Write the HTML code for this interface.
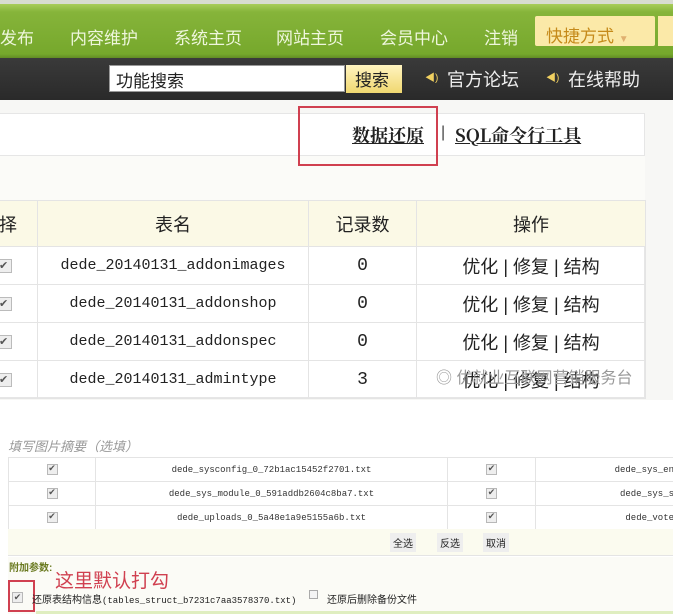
<!DOCTYPE html>
<html><head><meta charset="utf-8"><style>
*{margin:0;padding:0;box-sizing:border-box}
body{width:673px;height:614px;overflow:hidden;background:#fff;font-family:"Liberation Sans","Noto Sans CJK SC",sans-serif;position:relative}
.abs{position:absolute}
.nav{left:0;top:0;width:673px;height:58px;background:linear-gradient(#a8cc5a 0,#86b43a 8px,#76a82c 50px,#4d6e1c 58px);border-top:4px solid #d8dcd0}
.nav span{position:absolute;top:20px;color:#eef6dc;font-size:17px}
.bar2{left:0;top:58px;width:673px;height:42px;background:linear-gradient(#3a3a3a,#2a2a2a)}
.mono{font-family:"Liberation Mono","Noto Sans CJK SC",monospace}
.cb{display:inline-block;width:11px;height:11px;border:1px solid #b8b8b8;background:#eee;font-size:9px;line-height:9px;text-align:center;color:#555;vertical-align:middle}
.cbl{display:inline-block;width:13px;height:14px;border:1px solid #bbb;border-left:none;background:#eee;font-size:11px;line-height:12px;color:#555;vertical-align:middle}
td{border:1px solid #e4e4e4;text-align:center}
</style></head><body>
<div class="abs nav">
<span style="left:0">发布</span>
<span style="left:70px">内容维护</span>
<span style="left:174px">系统主页</span>
<span style="left:276px">网站主页</span>
<span style="left:380px">会员中心</span>
<span style="left:484px">注销</span>
<div class="abs" style="left:535px;top:12px;width:120px;height:30px;background:#fbe9a8;border-radius:2px"></div>
<span style="left:546px;top:18px;color:#c58a1a">快捷方式 <small style="color:#e0b070;font-size:10px">▼</small></span>
<div class="abs" style="left:658px;top:12px;width:15px;height:30px;background:#fbe9a8"></div>
</div>
<div class="abs bar2">
<div class="abs" style="left:109px;top:7px;width:236px;height:27px;background:#fff;border:1px solid #999;font-size:17px;padding:1px 6px;color:#222">功能搜索</div>
<div class="abs" style="left:346px;top:7px;width:56px;height:28px;background:linear-gradient(#fff4c0,#f0d870);font-size:17px;padding:1px 0 0 9px;color:#222">搜索</div>
<div class="abs" style="left:425px;top:11px;color:#f0d060;font-size:10px">◀)</div>
<div class="abs" style="left:447px;top:8px;color:#eee;font-size:18px">官方论坛</div>
<div class="abs" style="left:546px;top:11px;color:#f0d060;font-size:10px">◀)</div>
<div class="abs" style="left:568px;top:8px;color:#eee;font-size:18px">在线帮助</div>
</div>
<div class="abs" style="left:0;top:100px;width:673px;height:300px;background:#f7f7f5"></div>
<div class="abs" style="left:0;top:113px;width:645px;height:285px;background:#fff;border:1px solid #e6e6e6;border-left:none"></div>
<div class="abs" style="left:0;top:155px;width:645px;height:45px;background:#fbfbf8;border-top:1px solid #e6e6e6"></div>
<div class="abs" style="left:352px;top:122px;font-size:18px;font-weight:bold;text-decoration:underline;color:#222;font-family:'Noto Serif CJK SC',serif">数据还原</div>
<div class="abs" style="left:441px;top:124px;font-size:16px;color:#444">|</div>
<div class="abs" style="left:455px;top:122px;font-size:18px;font-weight:bold;text-decoration:underline;color:#222;font-family:'Noto Serif CJK SC',serif">SQL命令行工具</div>
<div class="abs" style="left:298px;top:106px;width:140px;height:60px;border:2px solid #d04050"></div>
<table class="abs" style="left:-2px;top:200px;border-collapse:collapse;font-size:18px;color:#222">
<tr style="height:46px;background:#fbf9e6"><td style="width:39px;text-align:left">择</td><td style="width:271px">表名</td><td style="width:108px">记录数</td><td style="width:229px">操作</td></tr>
<tr style="height:38px"><td style="text-align:left"><span class="cbl">✔</span></td><td class="mono" style="font-size:15px">dede_20140131_addonimages</td><td class="mono">0</td><td>优化 | 修复 | 结构</td></tr>
<tr style="height:38px"><td style="text-align:left"><span class="cbl">✔</span></td><td class="mono" style="font-size:15px">dede_20140131_addonshop</td><td class="mono">0</td><td>优化 | 修复 | 结构</td></tr>
<tr style="height:38px"><td style="text-align:left"><span class="cbl">✔</span></td><td class="mono" style="font-size:15px">dede_20140131_addonspec</td><td class="mono">0</td><td>优化 | 修复 | 结构</td></tr>
<tr style="height:38px"><td style="text-align:left"><span class="cbl">✔</span></td><td class="mono" style="font-size:15px">dede_20140131_admintype</td><td class="mono">3</td><td>优化 | 修复 | 结构</td></tr>
</table>
<div class="abs" style="left:436px;top:364px;font-size:16px;color:#999">◎ 优就业互联网营销服务台</div>
<div class="abs" style="left:8px;top:436px;font-size:13px;color:#999;font-style:italic">填写图片摘要（选填）</div>
<table class="abs mono" style="left:8px;top:457px;width:666px;table-layout:fixed;border-collapse:collapse;font-size:9px;color:#333">
<tr style="height:24px"><td style="width:87px"><span class="cb">✔</span></td><td style="width:352px">dede_sysconfig_0_72b1ac15452f2701.txt</td><td style="width:88px"><span class="cb">✔</span></td><td style="width:139px;text-align:right;white-space:nowrap">dede_sys_en</td></tr>
<tr style="height:24px"><td><span class="cb">✔</span></td><td>dede_sys_module_0_591addb2604c8ba7.txt</td><td><span class="cb">✔</span></td><td style="text-align:right;white-space:nowrap">dede_sys_s</td></tr>
<tr style="height:24px"><td><span class="cb">✔</span></td><td>dede_uploads_0_5a48e1a9e5155a6b.txt</td><td><span class="cb">✔</span></td><td style="text-align:right;white-space:nowrap">dede_vote</td></tr>
</table>
<div class="abs" style="left:8px;top:529px;width:665px;height:27px;background:#fbfbef;border-bottom:1px solid #e4e4e4"></div>
<div class="abs" style="left:390px;top:533px;font-size:10px;color:#222;background:#eee;padding:2px 3px">全选</div>
<div class="abs" style="left:437px;top:533px;font-size:10px;color:#222;background:#eee;padding:2px 3px">反选</div>
<div class="abs" style="left:483px;top:533px;font-size:10px;color:#222;background:#eee;padding:2px 3px">取消</div>
<div class="abs" style="left:8px;top:557px;width:665px;height:57px;background:#fbfbf6"></div>
<div class="abs" style="left:9px;top:559px;font-size:10px;color:#6a7a20;font-weight:bold">附加参数:</div>
<div class="abs" style="left:55px;top:566px;font-size:19px;color:#d04050">这里默认打勾</div>
<div class="abs" style="left:8px;top:580px;width:27px;height:32px;border:2px solid #d04050"></div>
<div class="abs" style="left:12px;top:589px"><span class="cb">✔</span></div>
<div class="abs" style="left:32px;top:591px;font-size:10px;color:#222">还原表结构信息<span class="mono" style="font-size:9px">(tables_struct_b7231c7aa3578370.txt)</span></div>
<div class="abs" style="left:309px;top:590px;width:9px;height:9px;border:1px solid #aaa;background:#f4f4f4"></div>
<div class="abs" style="left:327px;top:591px;font-size:10px;color:#222">还原后删除备份文件</div>
<div class="abs" style="left:36px;top:611px;width:637px;height:3px;background:#dfeec0"></div>
</body></html>
